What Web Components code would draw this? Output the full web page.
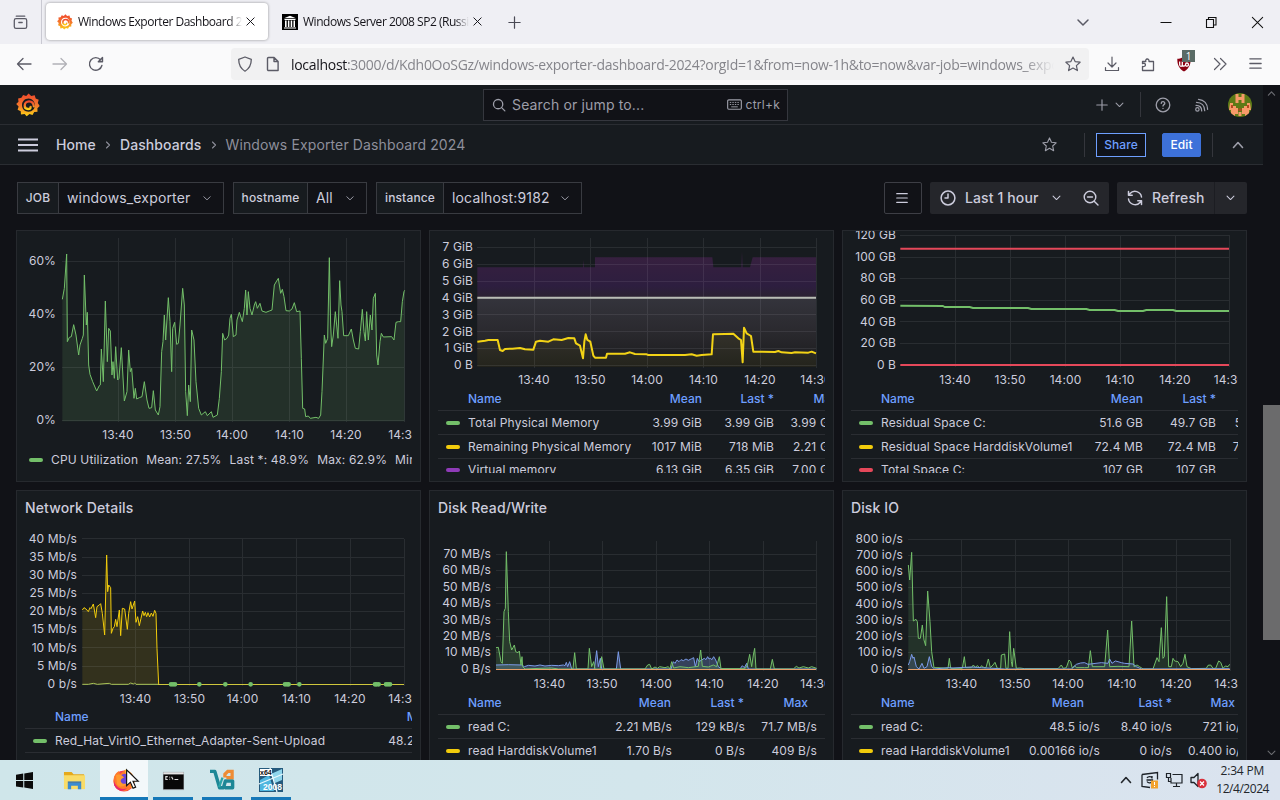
<!DOCTYPE html>
<html lang="en">

<head>
    <meta charset="utf-8">
    <title>Windows Exporter Dashboard 2024</title>
    <style>
        body {
            margin: 0;
            width: 1280px;
            height: 800px;
            overflow: hidden;
            display: flex;
            flex-direction: column;
            background: #111217;
            font-family: Inter, sans-serif;
        }

        .page {
            display: flex;
            height: 675px;
            flex: none;
        }

        .dashboard {
            width: 1263px;
            display: flex;
            flex-direction: column;
        }

        .grid {
            display: grid;
            grid-template-columns: repeat(3, 405px);
            grid-template-rows: 252px 290px;
            gap: 8px;
            padding: 0 16px;
            height: 530px;
            overflow: hidden;
        }
    </style>
</head>

<body>
    <browser-tabs>
        <browser-tab icon="grafana" active>Windows Exporter Dashboard 2024</browser-tab>
        <browser-tab icon="archive">Windows Server 2008 SP2 (Russian)</browser-tab>
    </browser-tabs>
    <browser-toolbar></browser-toolbar>

    <div class="page">
        <div class="dashboard">
            <app-header></app-header>
            <crumb-bar></crumb-bar>
            <control-bar>
                <var-picker label="JOB" style="--label:41px;--box:207px">windows_exporter</var-picker>
                <var-picker label="hostname" style="--label:74px;--box:134px">All</var-picker>
                <var-picker label="instance" style="--label:67px;--box:206px">localhost:9182</var-picker>
            </control-bar>
            <div class="grid">
                <dash-panel><time-chart name="cpu"></time-chart><inline-legend></inline-legend></dash-panel>
                <dash-panel><time-chart name="memory"></time-chart><legend-table name="memory"></legend-table></dash-panel>
                <dash-panel><time-chart name="space"></time-chart><legend-table name="space"></legend-table></dash-panel>
                <dash-panel heading="Network Details"><time-chart name="network"></time-chart><legend-table name="network"></legend-table></dash-panel>
                <dash-panel heading="Disk Read/Write"><time-chart name="diskrw"></time-chart><legend-table name="diskrw"></legend-table></dash-panel>
                <dash-panel heading="Disk IO"><time-chart name="diskio"></time-chart><legend-table name="diskio"></legend-table></dash-panel>
            </div>
        </div>
        <scroll-bar></scroll-bar>
    </div>

    <task-bar></task-bar>

    <script type="text/javascript">
        // small helper: every component is a class with a static html string
        function define(name, html, setup) {
            const tmpl = document.createElement('template');
            tmpl.innerHTML = html;
            customElements.define(name, class extends HTMLElement {
                constructor() {
                    super();
                    this.attachShadow({ mode: 'open' }).appendChild(tmpl.content.cloneNode(true));
                }
                connectedCallback() {
                    if (setup) setup(this, this.shadowRoot);
                }
            });
        }

        // --- ICONS ---
        // viewBox size, then the markup
        const line = 'fill="none" stroke="currentColor" stroke-linecap="round" stroke-linejoin="round"';
        const icons = {
            grafana: [24, `<defs><linearGradient id="g" x1="0" y1="0" x2="0" y2="1"><stop offset="0" stop-color="#f0482e"/><stop offset=".55" stop-color="#f47a2c"/><stop offset="1" stop-color="#fcd515"/></linearGradient></defs>
                <path fill="url(#g)" d="M12.6.4 15.2 3l3.5-.8 1 3.3 3 1.3-.9 3.3 1.9 2.9-2.3 2.2.1 3.5-3.3.4-1.7 2.9-3-.9-2.8 2.2-2.1-2.2-3.6.5-.3-3.3-3.1-1.6 1-3.1L.2 11l2.3-2.2-.4-3.4 3.3-.6L7.1 2l3.1 1zM12.7 5.6C8.600 5.600 6 8.500 6 12.200c0 3.700 3 6.500 6.600 6.500 3.700 0 6.300-2.900 6.300-6.200 0-3.700-2.900-6.900-6.200-6.900z" fill-rule="evenodd"/>
                <path fill="none" stroke="url(#g)" stroke-width="2.300" stroke-linecap="round" d="M17.800 13.300c-.2-3.200-2.200-5-4.700-5-2.700 0-4.400 1.900-4.400 4.200 0 2.100 1.500 3.500 3.400 3.500 1.500 0 2.500-1 2.500-2.100"/>`],
            archive: [16, '<path fill="#000" d="M0 0h16v16H0z"/><path fill="#fff" d="M2 4.200 8 1.800l6 2.400zM2.500 5h11v1h-11zM3 6.500h1.600v6.500H3zM5.900 6.500h1.500v6.500H5.900zM8.700 6.500h1.500v6.500H8.700zM11.500 6.500h1.500v6.500h-1.500zM2 13.500h12v1H2z"/>'],
            recent: [20, `<g ${line} stroke-width="1.500"><path d="M5 2.500h10"/><rect x="2.700" y="5.500" width="14.600" height="11.500" rx="2"/><path d="M8 10h4"/></g>`],
            close: [16, `<path ${line} stroke-width="1.200" d="m3.500 3.500 9 9m0-9-9 9"/>`],
            closeWin: [16, `<path ${line} stroke-width="1.100" d="m2.500 2.500 11 11m0-11-11 11"/>`],
            plus: [16, `<path ${line} stroke-width="1.300" d="M8 2v12M2 8h12"/>`],
            down: [16, `<path ${line} stroke-width="1.500" d="m3 6 5 5 5-5"/>`],
            up: [16, `<path ${line} stroke-width="1.600" d="m3.500 10.500 4.500-5 4.500 5"/>`],
            right: [16, `<path ${line} stroke-width="1.500" d="m6 4 4 4-4 4"/>`],
            min: [16, '<path stroke="currentColor" stroke-width="1" d="M2.500 8.500h11"/>'],
            restore: [16, '<path fill="none" stroke="currentColor" stroke-width="1.100" d="M3.500 5.500h7v8h-7zM5.500 5.500v-2h7.500v7.500h-2.500"/>'],
            back: [16, `<path ${line} stroke-width="1.300" d="M15 8H1.500M7 2.500 1.500 8 7 13.500"/>`],
            forward: [16, `<path ${line} stroke-width="1.300" d="M1 8h13.500M9 2.500 14.500 8 9 13.500"/>`],
            reload: [16, `<path ${line} stroke-width="1.400" d="M13.900 9.500A6.300 6.300 0 1 1 12.700 4M14.500 1.500v4.200h-4.200z"/>`],
            shield: [16, `<path ${line} stroke-width="1.300" d="M8 1 14.300 3.300c0 5.200-1.700 9.200-6.300 11.900C3.400 12.500 1.700 8.500 1.700 3.300z"/>`],
            file: [16, `<path ${line} stroke-width="1.400" d="M3.500 1.500h5.600l4 4v9H3.500a1 1 0 0 1-1-1v-11a1 1 0 0 1 1-1zM9 1.500v4h4"/>`],
            star: [16, `<path ${line} stroke-width="1.200" d="m8 1 2.100 4.600 5 .6-3.700 3.400 1 5L8 12.100l-4.400 2.500 1-5L.9 6.200l5-.6z"/>`],
            download: [16, `<path ${line} stroke-width="1.200" d="M8 1v9.500M4 7l4 4 4-4M1.500 11.500v3h13v-3"/>`],
            puzzle: [16, `<path ${line} stroke-width="1.300" d="M2.500 5.500h3.300c-1-3 3.500-3.500 3.200-.4v.4h4.500v9h-11v-4c3.500.9 4-3.700.8-3.200l-.8.200z"/>`],
            ublock: [16, '<path fill="#8a0012" d="M8 .5c2 1.600 4.500 2.300 6.700 2.300 0 6-1.700 10-6.700 12.700C3 12.800 1.300 8.800 1.300 2.800 3.500 2.800 6 2.100 8 .5z"/><path fill="none" stroke="#fff" stroke-width="1.300" d="M3.700 5.500v3.300c0 2 2.600 2 2.600 0V5.500m0 3.300c.2 1.800 3 1.800 3.200 0 .1-2.500 3-2.300 3 0 0 1.800-2.800 2-3 0"/>'],
            more: [16, `<path ${line} stroke-width="1.200" d="m2.500 2.500 5.500 5.500-5.500 5.500M8.500 2.500 14 8l-5.500 5.500"/>`],
            burger: [16, `<path ${line} stroke-width="1.400" d="M2 3h12M2 8h12M2 13h12"/>`],
            menu: [20, '<path stroke="currentColor" stroke-width="2" d="M0 4.500h20M0 10h20M0 15.500h20"/>'],
            search: [16, `<circle cx="7" cy="7" r="5.300" ${line} stroke-width="1.500"/><path ${line} stroke-width="1.500" d="m11 11 3.700 3.700"/>`],
            keyboard: [16, `<rect x=".7" y="3" width="14.600" height="10" rx="1.200" ${line} stroke-width="1.200"/><path stroke="currentColor" stroke-dasharray="1.500 1.200" d="M3 5.800h10.500M3 8h10.500"/><path stroke="currentColor" d="M4.500 10.500h7"/>`],
            help: [16, `<circle cx="8" cy="8" r="6.800" ${line} stroke-width="1.300"/><path ${line} stroke-width="1.300" d="M6.200 6.400C6.300 4 9.900 4.200 9.800 6.400 9.700 7.700 8 7.600 8 9M8 11.300v.1"/>`],
            rss: [16, `<circle cx="3.400" cy="12.400" r="1.700" ${line} stroke-width="1.200"/><path ${line} stroke-width="1.300" d="M2 8.300c3.400 0 5.700 2.200 5.700 5.600M2.500 5.300c5 0 8.200 3.400 8.200 8.400M4.500 2.300c5.600.6 9 4.600 9.100 10"/>`],
            clock: [16, `<circle cx="8" cy="8" r="6.900" ${line} stroke-width="1.500"/><path ${line} stroke-width="1.500" d="M8 4v4H5"/>`],
            zoomout: [16, `<circle cx="7" cy="7" r="5.800" ${line} stroke-width="1.400"/><path ${line} stroke-width="1.400" d="M4.500 7h5m1.700 4.200 3.800 3.800"/>`],
            sync: [16, `<path ${line} stroke-width="1.500" d="M14.500 7A6.600 6.600 0 0 0 3 3.600L1.500 5.200V1.400M1.500 5.200h3.700M1.500 9A6.600 6.600 0 0 0 13 12.400l1.500-1.600v3.800M14.500 10.800h-3.700"/>`],
            avatar: [24, '<clipPath id="c"><circle cx="12" cy="12" r="12"/></clipPath><g clip-path="url(#c)"><path fill="#5d7a16" d="M0 0h24v24H0z"/><path fill="#f79a68" d="M7.500 1h3v3h3V1h3v9h-3V7h-3v3h-3zM2 10h3v3h3v2h2v6H7v2H3v-6H1zM22 10h-3v3h-3v2h-2v6h3v2h4v-6h2zM10.500 19h3v4h-3z"/><path fill="#b5471f" d="M3 12h2v3H3zM19 12h2v3h-2zM10.500 15.500h3v2.500h-3z"/></g>'],
            windows: [16, '<path fill="#0b0b0b" d="M0 2.500 6.800 1.500v6H0zM7.800 1.300 16 0v7.500H7.800zM0 8.500h6.800v6L0 13.600zM7.800 8.500H16V16l-8.200-1.300z"/>'],
            folder: [24, '<path fill="#e5a91c" d="M1 3h8l2 2.500h11V9H1z"/><path fill="#f9dc68" d="M1 6.500h22V21H1z"/><path fill="#3b8bd0" d="M5 21v-6.500h14V21h-3.500v-3.500h-7V21z"/><path fill="#2f6fb0" d="M5 13h14v1.500H5z"/>'],
            firefox: [24, '<circle cx="12" cy="13" r="10.500" fill="#f43f52"/><path fill="#ff7a2a" d="M2 9c1-3 3-5 5-6l1 3 5-4c6 1 9.500 6 9.500 11-1 6-5 9.500-10 10C6 23 1.500 19 1.500 13z"/><path fill="#e8276c" d="M2 11c0 7 7 12 13 9-3 4-10 4-13-3z"/><circle cx="13" cy="11.500" r="5.800" fill="#6a45d8"/><path fill="#ffbd2e" d="M13 1.500c5 2 9.500 5.500 9.500 11 0 3-1.500 6-3.500 8 1-5 .5-8-2-10.500-1.500-1.500-4-3-4-8.500z"/><path fill="#ff9a2e" d="M4 7c3-1.500 7 0 8 3-2 0-4 2-3 4s4 2.500 6 1c-1 4-8 5-10 1z"/>'],
            terminal: [24, '<path fill="#9aa0a5" d="M1 3h22v19H1z"/><path fill="#080808" d="M1.500 5.500h21V21h-21z"/><path fill="#e6e6e6" d="M1.500 3.500h21v2h-21z"/><path fill="none" stroke="#ddd" stroke-width="1.200" d="M6 8H4v3h2M8 8v.8m0 1.500v.7M10 8l1.500 3M13 11h4"/>'],
            vnc: [26, '<path fill="none" stroke="#1d8796" stroke-width="3.600" stroke-linejoin="round" d="M0 3.500h5l5 17h4l2-7h7.500v7h-8"/><path fill="none" stroke="#2aa5a8" stroke-width="2.400" d="m9.500 20 3.500-10"/><path fill="none" stroke="#ee8c35" stroke-width="3.400" d="M15.500 10V6.500l3-3h4.500v6.500h-6"/>'],
            x64: [24, '<path fill="#255a7d" d="M0 0h24v24H0z"/><path fill="#4fb6df" d="m1 12 9-5 5 16H1z"/><path fill="#8fd5ec" d="m12 6 11-5v11l-7 3z"/><path stroke="#e9f8fd" stroke-width="1.300" d="M0 16 24 6M11 0l7 24" fill="none"/><rect x="1" y="1" width="12" height="7" fill="#fff"/><text x="1" y="7.200" font-family="Liberation Sans" font-weight="700" font-size="7" fill="#111">x64</text><text x="4" y="21.500" font-family="Liberation Sans" font-weight="700" font-size="8.500" fill="#fff">2008</text>'],
            update: [18, '<path fill="none" stroke="#1d2228" stroke-width="1.300" d="M1 3.500 16.500 1.500v7M1 3.500v12l8 1M6 7c1-2 5-1.800 5 .2M5.500 9h6c-.2 3-4 4-5.500 1.500M11 5v2.500"/><path fill="#f2a22d" d="M10 9.500h7v8h-7z"/><path stroke="#fff" d="M13.500 11v3m0 1v1"/>'],
            net: [18, '<path fill="none" stroke="#1d2228" stroke-width="1.200" d="M1.500 2.500h4v4h-4zM3.500 6.500v4H6M7.500 3.500H17v8.500H6V7M11.500 12v3.500M8 15.500h7"/>'],
            sound: [18, '<path fill="none" stroke="#1d2228" stroke-width="1.300" stroke-linejoin="round" d="M2 6.500h3L9 2.500v13L5 11.500H2z"/><circle cx="13" cy="12.500" r="4.800" fill="#d9303c"/><path stroke="#fff" stroke-width="1.300" d="m11 10.500 4 4m0-4-4 4"/>'],
            cursor: [24, '<path fill="#fff" stroke="#111" stroke-width="1.300" d="M3 1v18l4.300-4 3 7 3-1.300-3-6.700h6z"/>']
        };

        define('ui-icon', `<style>
                :host { display: inline-block; width: 16px; height: 16px; flex: none; }
                svg { display: block; width: 100%; height: 100%; overflow: visible; }
            </style><svg></svg>`, (el, root) => {
            const [size, body] = icons[el.getAttribute('name')];
            const svg = root.querySelector('svg');
            svg.setAttribute('viewBox', `0 0 ${size} ${size}`);
            svg.innerHTML = body;
            const s = el.getAttribute('size');
            if (s) el.style.width = el.style.height = s + 'px';
        });

        // --- BROWSER WINDOW ---
        define('browser-tabs', `<style>
                :host { display: flex; align-items: center; height: 44px; flex: none; background: #efeff4; color: #2b2a33; }
                .recent { width: 42px; height: 44px; display: flex; align-items: center; justify-content: center; border-right: 1px solid #c9c9d2; margin-right: 4px; box-sizing: border-box; }
                .recent ui-icon { color: #5b5b66; }
                .new { margin-left: 12px; color: #4a4a55; }
                .win { margin-left: auto; display: flex; align-items: center; padding-right: 15px; gap: 30px; color: #111; }
                .win :first-child { margin-right: 37px; color: #5b5b66; }
            </style>
            <div class="recent"><ui-icon name="recent" size="17"></ui-icon></div>
            <slot></slot>
            <ui-icon class="new" name="plus" size="15"></ui-icon>
            <div class="win"><ui-icon name="down"></ui-icon><ui-icon name="min"></ui-icon><ui-icon name="restore" style="margin:0 1px 0 -1px"></ui-icon><ui-icon name="closeWin" size="15"></ui-icon></div>`);

        define('browser-tab', `<style>
                :host { display: flex; align-items: center; width: 222px; height: 37px; margin-top: -1px; box-sizing: border-box; padding: 0 11px; gap: 5px; border-radius: 4px; color: #15141a; font: 12px "Open Sans", "Noto Sans", sans-serif; letter-spacing: -.48px; }
                :host([active]) { background: #fff; box-shadow: 0 0 3px rgba(0, 0, 0, .4); }
                :host(:not([active])) { width: 224px; margin-left: 3px; }
                .text { flex: 1; overflow: hidden; white-space: nowrap; -webkit-mask-image: linear-gradient(90deg, #000 92%, transparent); }
                .icon { display: flex; }
                .x { margin-left: -3px; }
            </style>
            <span class="icon"></span><span class="text"><slot></slot></span><ui-icon class="x" name="close" size="13"></ui-icon>`, (el, root) => {
            root.querySelector('.icon').innerHTML = `<ui-icon name="${el.getAttribute('icon')}"></ui-icon>`;
        });

        define('browser-toolbar', `<style>
                :host { display: flex; align-items: center; height: 41px; box-sizing: border-box; padding-bottom: 1px; flex: none; background: #fafafb; color: #5b5b66; }
                .nav { display: flex; gap: 20px; padding-left: 16px; width: 215px; box-sizing: content-box; }
                .off { opacity: .45; }
                .url { display: flex; align-items: center; width: 858px; height: 32px; box-sizing: border-box; padding: 0 8px 0 6px; background: #f1f1f2; border-radius: 4px; }
                .url span { flex: 1; margin: 0 11px 0 10px; overflow: hidden; white-space: nowrap; color: #85858b; font: 14px "Open Sans", "Noto Sans", sans-serif; letter-spacing: -.3px; -webkit-mask-image: linear-gradient(90deg, #000 96%, transparent); }
                b { font-weight: 400; color: #15141a; }
                .tools { display: flex; margin-left: 15px; gap: 20px; }
                .ext { position: relative; height: 16px; }
                .badge { position: absolute; left: 6px; top: -6px; width: 13px; height: 12px; background: #5a6b66; color: #fff; font: 10px/12px "Open Sans", sans-serif; text-align: center; }
            </style>
            <div class="nav"><ui-icon name="back"></ui-icon><ui-icon name="forward" class="off"></ui-icon><ui-icon name="reload"></ui-icon></div>
            <div class="url"><ui-icon name="shield"></ui-icon><ui-icon name="file" style="margin-left:12px"></ui-icon>
                <span><b>localhost</b>:3000/d/Kdh0OoSGz/windows-exporter-dashboard-2024?orgId=1&amp;from=now-1h&amp;to=now&amp;var-job=windows_exporter</span>
                <ui-icon name="star"></ui-icon></div>
            <div class="tools"><ui-icon name="download"></ui-icon><ui-icon name="puzzle"></ui-icon>
                <div class="ext"><ui-icon name="ublock"></ui-icon><span class="badge">1</span></div>
                <ui-icon name="more"></ui-icon><ui-icon name="burger" size="15"></ui-icon></div>`);

        // --- GRAFANA CHROME ---
        define('app-header', `<style>
                :host { display: flex; align-items: center; height: 40px; flex: none; box-sizing: border-box; padding: 0 11px 0 16px; background: #171b1f; border-bottom: 1px solid #2a2d32; color: #9d9ea9; }
                .search { display: flex; align-items: center; width: 305px; height: 32px; box-sizing: border-box; margin-left: 443px; padding: 0 7px 0 8px; border: 1px solid #35373e; background: #111217; font-size: 14px; letter-spacing: .15px; }
                .search span { flex: 1; margin-left: 6px; }
                .search small { margin-left: 4px; font-size: 12px; letter-spacing: .25px; }
                .end { margin-left: auto; display: flex; align-items: center; }
                .sep { width: 1px; height: 25px; background: #34363c; margin: 0 14px 0 15px; }
            </style>
            <ui-icon name="grafana" size="24"></ui-icon>
            <div class="search"><ui-icon name="search" size="14"></ui-icon><span>Search or jump to...</span><ui-icon name="keyboard" size="15"></ui-icon><small>ctrl+k</small></div>
            <div class="end"><ui-icon name="plus" size="14"></ui-icon><ui-icon name="down" size="11" style="margin-left:5px"></ui-icon>
                <div class="sep"></div><ui-icon name="help"></ui-icon>
                <ui-icon name="rss" style="margin:0 18px 0 23px"></ui-icon><ui-icon name="avatar" size="24"></ui-icon></div>`);

        define('crumb-bar', `<style>
                :host { display: flex; align-items: center; height: 40px; flex: none; box-sizing: border-box; padding: 0 17px 0 18px; background: #171b1f; border-bottom: 1px solid #2a2d32; color: #ccccdc; font-size: 14px; font-weight: 500; letter-spacing: .1px; }
                .path { display: flex; align-items: center; margin-left: 18px; gap: 6px; }
                .path ui-icon { color: #8e8f9b; }
                .here { color: #8e8f9b; font-weight: 400; letter-spacing: .12px; }
                .end { margin-left: auto; display: flex; align-items: center; color: #9d9ea9; }
                .sep { width: 1px; height: 24px; background: #34363c; }
                .btn { height: 24px; box-sizing: border-box; font-size: 12px; line-height: 22px; text-align: center; border: 1px solid #6e9fff; color: #6e9fff; background: #10131a; }
                .edit { background: #3d71d9; border-color: #3d71d9; color: #fff; border-radius: 2px; }
            </style>
            <ui-icon name="menu" size="20"></ui-icon>
            <div class="path"><span>Home</span><ui-icon name="right" size="12"></ui-icon><span>Dashboards</span><ui-icon name="right" size="12"></ui-icon><span class="here">Windows Exporter Dashboard 2024</span></div>
            <div class="end"><ui-icon name="star" size="15"></ui-icon><div class="sep" style="margin:0 11px 0 27px"></div>
                <div class="btn" style="width:50px">Share</div><div class="btn edit" style="width:39px;margin:0 11px 0 16px">Edit</div>
                <div class="sep" style="margin-right:17px"></div><ui-icon name="up"></ui-icon></div>`);

        define('control-bar', `<style>
                :host { display: flex; align-items: center; height: 65px; flex: none; padding: 0 16px 0 17px; color: #ccccdc; font-size: 14px; }
                .vars { display: flex; gap: 9px; flex: 1; }
                .tools { display: flex; gap: 8px; font-weight: 500; letter-spacing: .12px; }
                .tools div { display: flex; align-items: center; height: 32px; box-sizing: border-box; background: #25262b; border-radius: 2px; }
                .tools .outline { width: 38px; justify-content: center; background: none; border: 1px solid #3d3e45; padding-right: 3px; }
            </style>
            <div class="vars"><slot></slot></div>
            <div class="tools">
                <div class="outline"><ui-icon name="burger" size="14"></ui-icon></div>
                <div style="width:179px;padding-left:10px"><ui-icon name="clock"></ui-icon><span style="margin:0 13px 0 9px">Last 1 hour</span><ui-icon name="down" size="11"></ui-icon><ui-icon name="zoomout" style="margin-left:21px"></ui-icon></div>
                <div style="width:130px;padding-left:10px"><ui-icon name="sync"></ui-icon><span style="margin:0 9px 0 9px">Refresh</span><i style="width:1px;height:32px;background:#1c1d22"></i><ui-icon name="down" size="11" style="margin-left:10px"></ui-icon></div>
            </div>`);

        define('var-picker', `<style>
                :host { display: flex; width: var(--box); height: 32px; box-sizing: border-box; border: 1px solid #393b41; color: #ccccdc; }
                .label { width: var(--label); flex: none; box-sizing: border-box; display: flex; align-items: center; justify-content: center; background: #171b1f; border-right: 1px solid #393b41; font-size: 12px; font-weight: 500; letter-spacing: .15px; }
                .value { flex: 1; display: flex; align-items: center; justify-content: space-between; padding: 0 11px 0 8px; font-size: 14px; letter-spacing: .16px; }
                .value ui-icon { color: #a4a5b1; }
            </style>
            <span class="label"></span><span class="value"><slot></slot><ui-icon name="down" size="10"></ui-icon></span>`, (el, root) => {
            root.querySelector('.label').textContent = el.getAttribute('label');
        });

        define('scroll-bar', `<style>
                :host { display: flex; flex-direction: column; align-items: center; width: 17px; color: #6c6d72; }
                .thumb { width: 17px; height: 235px; margin-top: 306px; background: #6b6b6c; }
                .last { margin: auto 0 2px; }
            </style>
            <ui-icon name="up" size="11" style="margin-top:3px"></ui-icon><div class="thumb"></div><ui-icon class="last" name="down" size="11"></ui-icon>`);

        // --- PANELS ---
        define('dash-panel', `<style>
                :host { display: flex; flex-direction: column; box-sizing: border-box; padding: 0 8px 8px; border: 1px solid #26292e; background: #171b1f; overflow: hidden; }
                h2 { display: none; margin: 0; height: 40px; line-height: 34px; color: #ccccdc; font-size: 14px; font-weight: 500; letter-spacing: .12px; }
                :host([heading]) h2 { display: block; }
            </style><h2></h2><slot></slot>`, (el, root) => {
            root.querySelector('h2').textContent = el.getAttribute('heading') || '';
        });

        define('inline-legend', `<style>
                :host { display: flex; align-items: center; gap: 8px; height: 25px; width: 387px; overflow: hidden; white-space: nowrap; color: #ccccdc; font-size: 12px; letter-spacing: .16px; }
                i { flex: none; width: 14px; height: 4px; margin: 0 0 0 4px; border-radius: 2px; background: #73bf69; }
            </style>
            <i></i><span>CPU Utilization</span><span>Mean: 27.5%</span><span>Last *: 48.9%</span><span>Max: 62.9%</span><span>Min: 1.18%</span>`);

        const green = '#73bf69', yellow = '#f2cc0c', red = '#e5485a', purple = '#8f3bb8', blue = '#7b9be8';
        const tables = {
            memory: {
                cols: '30px 163px 71px 72px 66px', head: '30px 163px 71px 72px 64px',
                names: ['Mean', 'Last *', 'Max'],
                rows: [[green, 'Total Physical Memory', '3.99 GiB', '3.99 GiB', '3.99 GiB'],
                    [yellow, 'Remaining Physical Memory', '1017 MiB', '718 MiB', '2.21 GiB'],
                    [purple, 'Virtual memory', '6.13 GiB', '6.35 GiB', '7.00 GiB']]
            },
            space: {
                cols: '30px 192px 70px 73px 65px', head: '30px 192px 70px 73px 65px',
                names: ['Mean', 'Last *', 'Max'],
                rows: [[green, 'Residual Space C:', '51.6 GB', '49.7 GB', '54.6 GB'],
                    [yellow, 'Residual Space HarddiskVolume1', '72.4 MB', '72.4 MB', '72.4 MB'],
                    [red, 'Total Space C:', '107 GB', '107 GB', '107 GB']]
            },
            network: {
                cols: '30px 280px 108px', head: '30px 280px 104px',
                names: ['Mean'],
                rows: [[green, 'Red_Hat_VirtIO_Ethernet_Adapter-Sent-Upload', '48.2 kb/s'], [yellow, '', '']]
            },
            diskrw: {
                cols: '30px 132px 72px 73px 72px', head: '30px 132px 71px 73px 64px',
                names: ['Mean', 'Last *', 'Max'],
                rows: [[green, 'read C:', '2.21 MB/s', '129 kB/s', '71.7 MB/s'],
                    [yellow, 'read HarddiskVolume1', '1.70 B/s', '0 B/s', '409 B/s']]
            },
            diskio: {
                cols: '30px 132px 87px 72px 75px', head: '30px 132px 71px 88px 63px',
                names: ['Mean', 'Last *', 'Max'],
                rows: [[green, 'read C:', '48.5 io/s', '8.40 io/s', '721 io/s'],
                    [yellow, 'read HarddiskVolume1', '0.00166 io/s', '0 io/s', '0.400 io/s']]
            }
        };

        define('legend-table', `<style>
                :host { display: block; flex: 1; min-height: 0; width: 387px; overflow: hidden; color: #ccccdc; font-size: 12px; letter-spacing: .13px; }
                .row { display: grid; align-items: center; width: 460px; height: 24px; box-sizing: border-box; border-top: 1px solid #2a2d32; white-space: nowrap; text-align: right; }
                .row:nth-of-type(4) { height: 22px; }
                .head { height: 23px; border: 0; color: #6e9fff; font-weight: 500; letter-spacing: 0; }
                .row > :nth-child(2) { text-align: left; }
                i { width: 14px; height: 4px; margin-left: 8px; border-radius: 2px; }
            </style>`, (el, root) => {
            const t = tables[el.getAttribute('name')];
            let html = `<div class="row head" style="grid-template-columns:${t.head}"><b></b><span>Name</span>${t.names.map(n => `<span>${n}</span>`).join('')}</div>`;
            for (const [color, ...cells] of t.rows) {
                html += `<div class="row" style="grid-template-columns:${t.cols}"><i style="background:${cells[0] ? color : 'none'}"></i>${cells.map(c => `<span>${c}</span>`).join('')}</div>`;
            }
            root.innerHTML += html;
        });

        // --- CHARTS ---
        // box: x, y and height of the svg; x / y: tick positions; points are in thirds of a pixel from "origin"
        // zero: y and colour of the flat series that lie on the axis
        const times = ['13:40', '13:50', '14:00', '14:10', '14:20', '14:30'];
        const steps = (n, step, unit, zero) => Array.from({ length: n + 1 }, (_, i) => i ? i * step + unit : zero);
        const charts = {
            cpu: {
                box: [25, 231, 216], origin: [10, 225], plot: [62, 238, 404, 421], labelX: 56, timeY: 439,
                x: [118, 175.500, 232, 289.500, 346, 404], y: [420.700, -53], labels: steps(3, 20, '%', '0%'), base: 589,
                series: [{
                    color: green, fill: .13, points: '157,223 163,190 170,87 172,350 178,337 184,335 191,299 198,330 206,390 210,360 217,340 220,330 223,150 229,300 232,262 236,420 240,448 248,470 260,498 268,482 271,480 274,372 280,470 286,228 292,410 296,310 301,318 306,450 309,410 313,460 317,365 323,465 327,460 334,368 343,528 351,500 356,375 361,440 365,430 372,520 376,490 380,522 388,518 396,515 403,470 411,525 417,550 425,548 430,497 436,555 445,570 450,545 455,380 459,350 463,270 467,345 475,218 480,290 485,440 488,310 494,292 500,358 505,355 510,300 518,190 523,240 527,500 532,572 536,480 541,530 545,315 552,345 558,470 566,550 574,570 586,560 592,572 604,560 609,577 622,570 628,520 634,440 638,325 644,345 651,340 656,330 660,280 664,268 670,335 678,330 681,285 688,262 697,290 703,250 707,195 711,270 715,200 720,250 726,270 733,240 737,230 742,250 750,235 756,258 768,262 778,258 786,255 793,180 800,168 805,160 812,205 817,193 822,215 828,257 838,258 846,252 853,233 860,260 870,258 874,400 878,550 884,552 887,575 895,573 901,580 918,577 926,580 932,570 936,500 943,330 947,355 953,340 958,98 962,300 965,365 970,330 976,260 984,340 989,167 993,240 996,260 1001,332 1015,332 1024,312 1030,345 1036,370 1046,372 1051,320 1057,253 1062,320 1066,348 1070,260 1075,345 1081,270 1086,315 1090,220 1096,205 1100,390 1104,420 1110,350 1114,325 1120,336 1145,335 1152,345 1158,292 1165,290 1172,290 1177,230 1182,200 1184,196'
                }]
            },
            memory: {
                box: [438, 231, 156], origin: [425, 225], plot: [477, 238, 816, 366.500], labelX: 473, timeY: 384,
                x: [534, 590, 647, 703.500, 760, 816], y: [365.500, -16.850], labels: steps(7, 1, ' GiB', '0 B'), base: 425,
                series: [
                    { color: 'none', fill: 1, paint: 'url(#virtual)', points: '157,127 474,127 475,105 477,127 510,127 510,97 862,97 865,127 949,127 951,80 953,127 975,127 983,97 1173,97' },
                    { color: '#b9bdb5', width: 2, fill: 1, paint: 'url(#total)', points: '157,218 1173,218' },
                    { color: '#f2d316', width: 2, fill: .05, points: '157,350 180,347 190,345 218,345 225,375 233,378 240,372 262,371 285,369 300,373 325,374 333,350 345,347 370,350 385,343 410,345 430,339 448,340 453,355 465,362 474,400 478,350 482,328 487,345 496,350 505,392 510,398 543,398 546,386 600,386 615,382 630,387 665,388 670,390 780,390 800,388 815,392 830,390 860,388 864,328 900,327 925,326 940,340 948,345 953,412 957,308 965,325 973,330 978,333 985,380 1050,381 1060,378 1070,382 1100,384 1110,382 1150,383 1160,380 1173,385' }
                ]
            },
            space: {
                box: [851, 231, 156], origin: [838, 225], plot: [900, 235, 1229, 365.500], labelX: 896, timeY: 384,
                x: [955, 1010, 1065.500, 1120, 1175, 1229.500], y: [365, -21.600], labels: steps(6, 20, ' GB', '0 B'), base: 420,
                series: [
                    { color: green, width: 2, points: '187,242 315,243 320,246 395,246 405,249 570,249 580,252 745,252 755,255 830,255 840,258 915,258 925,255 1005,255 1015,258 1173,258' },
                    { color: red, width: 2, points: '187,71 1173,71' },
                    { color: red, width: 2, points: '187,420 1173,420' }
                ]
            },
            network: {
                box: [25, 531, 174], origin: [10, 485], plot: [82, 539, 404, 684.500], labelX: 77, timeY: 703,
                x: [135.500, 189.500, 242.500, 296.500, 350, 404], y: [684.300, -18.170], labels: steps(8, 5, ' Mb/s', '0 b/s'), base: 598,
                zero: [158, 684, '#cfc63c'],
                dots: [483, 489, 495, 568, 646, 722, 825, 831, 836, 868, 1095, 1100, 1106, 1128, 1134, 1140],
                series: [
                    { color: yellow, fill: .13, points: '217,375 222,368 228,372 235,380 240,368 243,371 250,357 257,398 261,365 268,360 272,356 277,385 284,450 290,210 293,320 296,300 302,308 304,445 309,430 313,425 317,403 321,425 328,375 332,452 337,370 344,372 352,433 356,385 362,350 366,372 374,348 378,412 383,395 388,422 393,400 398,378 402,392 406,382 410,395 414,383 419,396 424,384 429,394 434,376 438,385 441,490 446,598' },
                    { color: '#a9c457', points: '217,598 235,598 250,595 262,598 285,596 298,595 304,598 355,598 362,594 370,597 374,594 378,598 446,598' }
                ]
            },
            diskrw: {
                box: [438, 531, 160], origin: [425, 485], plot: [496, 541, 816, 669.500], labelX: 491, timeY: 688,
                x: [549.500, 602, 656, 709.500, 763, 816], y: [669, -16.400], labels: steps(7, 10, ' MB/s', '0 B/s'), base: 552,
                zero: [496, 669, '#e8a06a'],
                series: [
                    { color: blue, fill: .3, points: '213,540 250,539 290,540 298,545 310,541 330,543 345,540 360,543 380,541 400,542 415,540 420,542 424,532 428,545 434,530 440,552 508,552 515,497 520,545 526,520 530,552 574,552 580,500 587,552 738,552 745,530 750,535 756,525 762,530 768,524 775,527 783,522 790,526 800,521 806,518 811,545 817,520 822,530 830,525 838,520 843,524 848,515 852,522 856,520 861,524 866,515 872,525 880,545 890,552 945,552 952,542 958,548 965,535 970,552 1175,552' },
                    { color: green, fill: .2, points: '213,488 220,487 228,530 232,535 237,380 241,370 244,200 250,380 254,470 260,495 264,488 268,480 272,500 279,503 283,498 288,540 291,515 293,545 300,552 345,550 380,549 400,552 444,552 449,503 454,552 489,552 493,490 500,545 506,530 510,552 526,552 530,515 537,552 660,552 668,540 674,538 680,552 690,546 697,550 704,545 720,548 730,545 735,552 740,530 746,549 765,545 790,548 820,544 827,495 832,544 850,546 865,540 875,545 883,515 888,551 960,551 967,540 970,528 974,508 980,545 985,510 989,490 993,552 1036,552 1042,523 1048,552 1105,552 1114,544 1122,549 1135,545 1150,549 1160,545 1175,550' }
                ]
            },
            diskio: {
                box: [851, 531, 160], origin: [838, 485], plot: [908, 539, 1230, 669.500], labelX: 903, timeY: 688,
                x: [961.500, 1015, 1068, 1122, 1176, 1230], y: [669, -16.250], labels: steps(8, 100, ' io/s', '0 io/s'), base: 552,
                zero: [908, 669, '#e8a06a'],
                series: [
                    { color: green, fill: .14, points: '211,240 215,285 221,202 226,408 234,403 238,410 241,460 247,460 253,420 258,465 263,482 269,318 276,410 281,500 288,548 300,548 330,550 334,520 338,550 373,550 379,515 383,548 400,548 406,540 412,547 418,542 425,548 432,542 438,548 444,548 451,522 457,548 465,540 471,532 478,550 488,550 490,510 500,507 504,550 510,550 515,440 520,530 523,545 527,490 535,550 545,549 560,551 660,551 670,540 676,550 685,548 693,525 698,530 703,550 710,542 715,548 740,548 751,548 757,497 763,545 800,545 809,435 815,545 840,544 873,545 881,408 888,545 897,540 905,545 915,552 945,552 957,518 963,530 970,428 975,520 979,515 986,335 992,545 1000,545 1005,520 1010,528 1020,530 1028,545 1035,535 1041,508 1047,545 1060,551 1105,550 1110,541 1118,540 1125,550 1133,550 1142,528 1148,532 1155,550 1162,543 1170,545 1175,538' },
                    { color: blue, fill: .2, points: '211,540 215,530 221,508 225,520 228,516 235,545 243,552 252,535 258,550 267,545 274,515 281,545 290,552 330,548 345,549 400,546 430,548 500,552 700,552 715,538 728,534 740,533 750,538 765,536 790,533 810,535 815,522 822,535 832,528 840,530 850,533 860,535 885,537 895,545 910,552 1175,551' }
                ]
            }
        };

        define('time-chart', `<style>
                :host { display: block; flex: none; width: 387px; }
                svg { display: block; overflow: hidden; }
                text { fill: #ccccdc; font: 12px Inter, sans-serif; letter-spacing: .1px; }
                .grid { stroke: #ccccdc; stroke-opacity: .1; fill: none; shape-rendering: crispEdges; }
                polyline { fill: none; vector-effect: non-scaling-stroke; stroke-linejoin: round; }
            </style>`, (el, root) => {
            const c = charts[el.getAttribute('name')];
            const [bx, by, bh] = c.box, [left, top, right, bottom] = c.plot;
            const grid = c.x.map(x => `M${x} ${top}V${bottom + 1}`).join('') +
                c.labels.map((_, i) => `M${left} ${c.y[0] + i * c.y[1]}H${right}`).join('');
            const labels = c.labels.map((l, i) => `<text x="${c.labelX}" y="${c.y[0] + i * c.y[1] + 3.700}" text-anchor="end">${l}</text>`).join('') +
                c.x.map((x, i) => `<text x="${x}" y="${c.timeY}" text-anchor="middle">${times[i]}</text>`).join('');
            const areas = c.series.filter(s => s.fill).map(s => {
                const first = s.points.split(',')[0], last = s.points.split(' ').pop().split(',')[0];
                return `<polygon fill="${s.paint || s.color}" fill-opacity="${s.fill}" points="${first},${c.base} ${s.points} ${last},${c.base}"/>`;
            }).join('');
            const lines = c.series.map(s => `<polyline stroke="${s.color}" stroke-width="${s.width || 1}" points="${s.points}"/>`).join('');
            const zero = c.zero ? `<rect x="${c.zero[0]}" y="${c.zero[1]}" width="${right - c.zero[0]}" height="1" fill="${c.zero[2]}"/>` : '';
            const dots = (c.dots || []).map(x => `<circle cx="${x}" cy="${c.base}" r="7" fill="${green}"/>`).join('');
            const group = `<g transform="translate(${c.origin}) scale(.33333)">`;
            root.innerHTML += `<svg width="387" height="${bh}" viewBox="${bx} ${by} 387 ${bh}">
                <defs>
                    <linearGradient id="virtual" x1="0" y1="0" x2="0" y2="1"><stop offset="0" stop-color="#38203f"/><stop offset=".3" stop-color="#2d1e3f"/><stop offset=".4" stop-color="#2a2230"/><stop offset="1" stop-color="#1b1b1f"/></linearGradient>
                    <linearGradient id="total" x1="0" y1="0" x2="0" y2="1"><stop offset="0" stop-color="#34343c"/><stop offset=".5" stop-color="#2a292e"/><stop offset="1" stop-color="#1a1b1d"/></linearGradient>
                </defs>
                ${group}${areas}</g><path class="grid" d="${grid}"/>${group}${lines}</g>${zero}${group}${dots}</g>${labels}</svg>`;
        });

        // --- TASKBAR ---
        define('task-bar', `<style>
                :host { display: flex; height: 40px; flex: none; background: linear-gradient(90deg, #cfe6ea, #d3e6ec 50%, #dbe3ef); color: #22262b; font: 12px "Open Sans", "Noto Sans", sans-serif; }
                .app { display: flex; align-items: center; justify-content: center; height: 40px; box-sizing: border-box; }
                .run { border-bottom: 3px solid #1678b8; padding-top: 3px; margin-right: 9px; }
                .active { background: #f3f8fa; margin-right: 5px; position: relative; }
                .active [name=cursor] { position: absolute; left: 24px; top: 9px; }
                .tray { margin-left: auto; display: flex; align-items: center; gap: 6px; }
                .tray ui-icon:nth-child(2) { margin-left: 1px; }
                .time { margin: -1px 11px 0 3px; line-height: 18px; text-align: right; letter-spacing: -.45px; }
                .time div:first-child { padding-right: 5px; letter-spacing: -.2px; }
            </style>
            <div class="app" style="width:48px"><ui-icon name="windows" size="17"></ui-icon></div>
            <div class="app" style="width:52px"><ui-icon name="folder" size="23"></ui-icon></div>
            <div class="app run active" style="width:48px"><ui-icon name="firefox" size="24"></ui-icon><ui-icon name="cursor" size="21"></ui-icon></div>
            <div class="app run" style="width:40px"><ui-icon name="terminal" size="23"></ui-icon></div>
            <div class="app run" style="width:40px"><ui-icon name="vnc" size="25"></ui-icon></div>
            <div class="app run" style="width:40px"><ui-icon name="x64" size="24"></ui-icon></div>
            <div class="tray"><ui-icon name="up"></ui-icon><ui-icon name="update" size="18"></ui-icon><ui-icon name="net" size="18"></ui-icon><ui-icon name="sound" size="18"></ui-icon>
                <div class="time"><div>2:34 PM</div><div>12/4/2024</div></div></div>`);
    </script>
</body>

</html>
